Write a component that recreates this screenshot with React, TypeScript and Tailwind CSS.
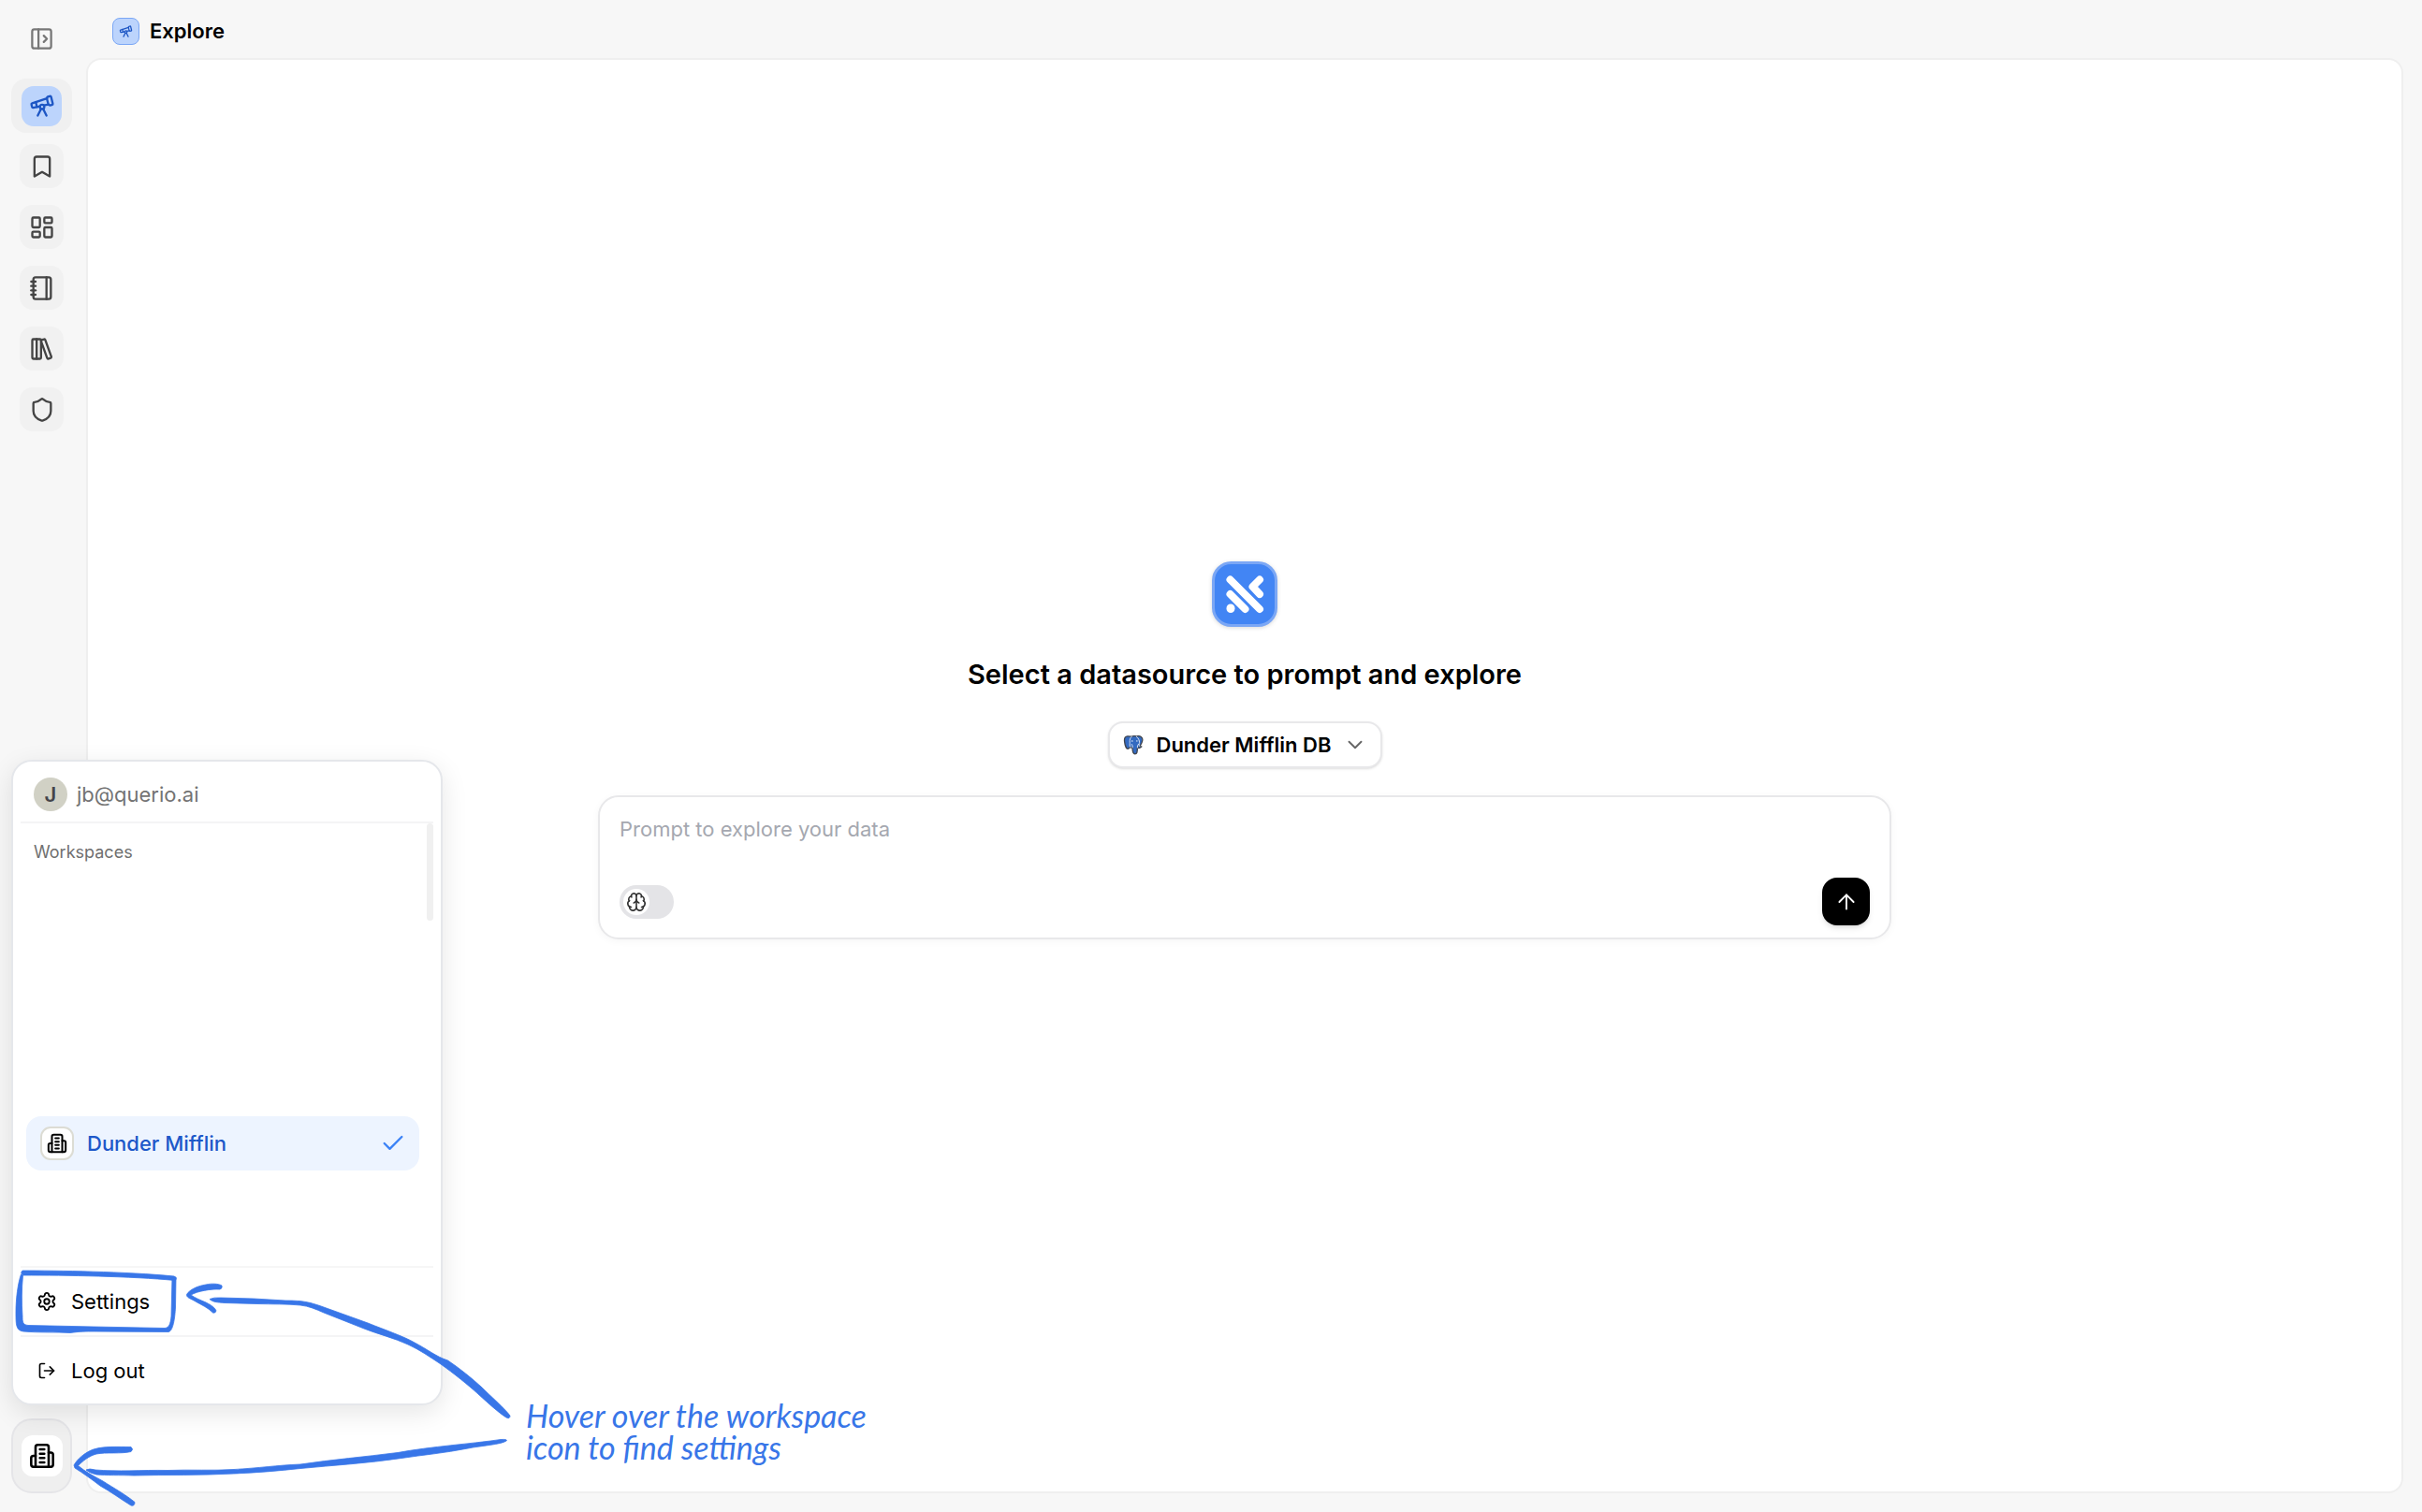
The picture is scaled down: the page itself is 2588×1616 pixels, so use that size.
import {ReactNode, useState} from 'react';
import {
    ArrowUp,
    Bookmark,
    Brain,
    Check,
    ChevronDown,
    LayoutDashboard,
    LibraryBig,
    LogOut,
    Notebook,
    PanelLeftOpen,
    Settings,
    Shield,
    Telescope,
} from 'lucide-react';

const navItems = [
    {label: 'Saved', icon: Bookmark},
    {label: 'Dashboards', icon: LayoutDashboard},
    {label: 'Notebooks', icon: Notebook},
    {label: 'Library', icon: LibraryBig},
    {label: 'Security', icon: Shield},
];

const WorkspaceIcon = ({className}: {className: string}) => (
    <svg viewBox="0 0 24 24" fill="none" stroke="currentColor" strokeWidth="2.2" strokeLinecap="round"
         strokeLinejoin="round" className={className}>
        <path d="M6 22V4a2 2 0 0 1 2-2h8a2 2 0 0 1 2 2v18Z"/>
        <path d="M6 12H4a2 2 0 0 0-2 2v6a2 2 0 0 0 2 2h2"/>
        <path d="M18 9h2a2 2 0 0 1 2 2v9a2 2 0 0 1-2 2h-2"/>
        <path d="M10 6h4M10 10h4M10 14h4M10 18h4"/>
    </svg>
);

const QuerioLogo = () => (
    <svg viewBox="0 0 70 70" fill="none" stroke="white" strokeWidth="8" strokeLinecap="round"
         strokeLinejoin="round" className="size-[70px] drop-shadow-sm">
        <rect x="1.5" y="1.5" width="67" height="67" rx="19" fill="#4285f4" stroke="#7ba7f5" strokeWidth="3"/>
        <path d="M19.5 19.500L51 51"/>
        <path d="M19.5 35L35.500 51"/>
        <path d="M51 19.500L43.500 27L51 35"/>
        <path d="M20 50v.6" strokeWidth="9"/>
    </svg>
);

const PostgresIcon = () => (
    <svg viewBox="0 0 24 24" className="size-[22px]" strokeLinejoin="round" strokeLinecap="round">
        <path
            d="M6.200 2C2.500 1.600 1.300 4.200 1.700 8c.4 3.600 2 8.500 3.900 8.700 1.200.1 1.900-1.100 2.700-2 .6.600 1.500.8 2.600.8.200 2.500-.1 7 2.900 7.200 2.600.1 2.900-2.400 3-7.200 1.200.4 3.700.2 4.900-1.400-.9-.1-1.800 0-2.200-.5C21.600 10.500 24.100 5 21.300 2.900 19.500 1.500 17.300 1.700 15.600 2.100 13 1.500 11.600 1.600 10 2.400 8.800 2 7.500 2 6.200 2Z"
            fill="#336ac0" stroke="#3f434c" strokeWidth="1.4"/>
        <path
            d="M10 2.500C8 4 7.700 6.500 7.900 9c.1 2-.5 3.700.4 5.500M15.600 2.300c2.600 2 3.600 5 3.500 7-.1 1.500-.9 2.500.2 4.300M11 15.200c.3-1.600-.1-2.500-.8-3.700M16.800 15.300c-.3-1.800.4-2.500 1.200-4"
            fill="none" stroke="#e8eef8" strokeWidth="1"/>
        <circle cx="10.700" cy="7.700" r=".8" fill="white"/>
        <circle cx="16.200" cy="7.500" r=".8" fill="white"/>
    </svg>
);

const MenuButton = ({icon, children}: {icon: ReactNode, children: ReactNode}) => (
    <button type="button" className="flex w-full items-center gap-4 px-[18px] py-2">
        {icon}
        {children}
    </button>
);

const Sidebar = () => (
    <aside className="flex w-[92px] shrink-0 flex-col items-center pt-[26px] pr-[15px] pb-5 pl-3">
        <button type="button" aria-label="Open sidebar" className="p-0.5 text-[#777777]">
            <PanelLeftOpen size={27} strokeWidth={2}/>
        </button>

        <nav className="mt-[27px] flex flex-col items-center gap-[18px]">
            <a href="#explore" aria-label="Explore"
               className="flex h-[58px] w-[65px] items-center justify-center rounded-2xl bg-[#f0f0f0]">
                <span className="flex size-[43px] items-center justify-center rounded-[13px] bg-[#bcd4fc] text-[#1d56c4]">
                    <Telescope size={28}/>
                </span>
            </a>
            {navItems.map(({label, icon: Icon}, idx) => (
                <a key={label} href={`#${label.toLowerCase()}`} aria-label={label}
                   className={`flex size-[47px] items-center justify-center rounded-[14px] bg-[#f1f1f1] text-[#444444] ${idx === 0 ? '-mt-1.5' : ''}`}>
                    <Icon size={28}/>
                </a>
            ))}
        </nav>

        <button type="button" aria-label="Workspace"
                className="mt-auto flex h-20 w-[65px] items-center justify-center rounded-[22px] border-2 border-[#e5e5e8] bg-[#efefef]">
            <span className="flex size-11 items-center justify-center rounded-xl bg-white text-black">
                <WorkspaceIcon className="size-7"/>
            </span>
        </button>
    </aside>
);

const WorkspaceMenu = () => (
    <div
        className="absolute bottom-[114px] left-3 flex h-[690px] w-[461px] flex-col rounded-[22px] border-2 border-[#e5e7eb] bg-white px-2 text-[22px] leading-7 shadow-[0_8px_28px_rgba(0,0,0,0.10)]">
        <div className="flex h-[66px] shrink-0 items-center gap-2.5 border-b-2 border-[#f4f4f5] px-3.5 pt-1.5 text-[#737373]">
            <span className="flex size-9 items-center justify-center rounded-full bg-[#d1d1c5] font-semibold text-[#44444a]">J</span>
            jb@querio.ai
        </div>

        <div className="flex min-h-0 flex-1 justify-between border-b-2 border-[#f6f6f6]">
            <div className="flex flex-1 flex-col pl-1.5">
                <h2 className="px-2 pt-[19px] text-[18px] leading-6 text-[#6f6f6f]">Workspaces</h2>
                <button type="button"
                        className="mt-auto mb-[102px] flex h-[58px] items-center gap-3.5 rounded-2xl bg-[#edf4ff] pr-3.5 pl-[15px] font-medium text-[#1d58c9]">
                    <span className="flex size-9 items-center justify-center rounded-[11px] border-2 border-[#dcdcd4] bg-white text-black">
                        <WorkspaceIcon className="size-[22px]"/>
                    </span>
                    Dunder Mifflin
                    <Check size={28} strokeWidth={2} className="ml-auto text-[#3b82f6]"/>
                </button>
            </div>
            <div className="ml-2 h-[104px] w-[7px] rounded-full bg-[#f0f0f0]"/>
        </div>

        <div className="flex h-[74px] shrink-0 items-center border-b-2 border-[#f4f4f5]">
            <MenuButton icon={<Settings size={22} className="-mx-px"/>}>Settings</MenuButton>
        </div>
        <div className="flex h-[71px] shrink-0 items-center">
            <MenuButton icon={<LogOut size={20}/>}>Log out</MenuButton>
        </div>
    </div>
);

// hand drawn strokes that point at the workspace icon and at the settings entry
const Annotation = () => (
    <div className="pointer-events-none absolute bottom-0 left-0 h-[286px] w-[960px] text-[#3876e8]">
        <svg viewBox="0 0 560 286" fill="currentColor" stroke="currentColor" strokeWidth="0.8" strokeLinejoin="round"
             className="h-[286px] w-[560px]">
            {/*box round settings*/}
            <path d="M24 28C60 28 135 29 186 34Q190 36 187 38.500C140 34 70 33 25 33Q21 31 24 28Z"/>
            <path d="M22.500 32C19 42 17 58 17 73C17 86 17 92 25 93C40 94.500 60 93.500 75 94.500C85 93 92 93 100 93L180 93.500C185 93 187 78 187.500 67L188 35H184L183 77C182 85 181 89 176 89.500L100 88L30 86.500C24 86 24 82 24 77C23 62 23 48 24.500 33Z"/>
            {/*arrow to settings*/}
            <path d="M199.500 53.500C202 49 210 44.500 220 43C226 41.500 234 42 237 44Q238 47 235 48C225 47.500 211 50 204 54C208 57 214 59.500 220 62C226 65 230 68 231 71Q230 74 227.500 73C223 68 214 64 209 61C204 58 199 57 199.500 53.500Z"/>
            <path d="M224 58.500Q228 56.500 236 57L271 58L305 60C325 60 331 62 343 66L393 84C413 92 433 99 443 105C455 111 466 120 478.500 124C492 133 504 143 514 152C525 163 538 174 545 183Q545 187 541 185C533 180 522 170 511 160C500 150 485 138 471 128C459 120 449 113 436 107C421 100 404 96 389 90L346 73C337 69 330 66 321 65C307 63.500 290 64 275 63.500L240 62.500C232 62 227 61.500 224 58.500Z"/>
            {/*arrow to the workspace icon*/}
            <path d="M79 236C82 230 91 222 100 219C111 215.500 126 216.500 140 216.500Q143 219 140 221.500C130 224 113 222 103 224C95 226 88 232 83.500 236.500C91 243 101 248 110 253C121 260 135 268 144 275.500Q144 280 140 279C130 273 118 264 107 258C98 251 88 244 80 239Z"/>
            <path d="M92 241Q95 239 102 241C125 243 152 241 179 241.500C203 240.500 228 242 250 240.500C277 239 296 236 321 235C355 230 390 227 425 222.500C460 216 505 213 535 208.500Q543 208 541 210C535 214 515 215 500 218C475 223 452 225 429 228.500C392 234 357 236 321 239.500C298 242 274 244 250 245C214 247 179 246 143 247C128 246.500 114 247 103 246Q95 244 92 241Z"/>
        </svg>
        <p className="absolute top-[166px] left-[562px] font-[Lato,cursive] text-[34px] leading-[34px] italic">
            Hover over the workspace<br/>icon to find settings
        </p>
    </div>
);

const PromptBox = () => {
    const [prompt, setPrompt] = useState('');
    const [thinking, setThinking] = useState(false);

    return (
        <form onSubmit={e => e.preventDefault()}
              className="mt-[29px] w-full max-w-[1382px] rounded-[22px] border-2 border-[#e8e8ea] bg-white px-[21px] pt-5 pb-[13px] shadow-[0_2px_8px_rgba(0,0,0,0.04)]">
            <textarea value={prompt} onChange={e => setPrompt(e.target.value)} rows={2} aria-label="Prompt"
                      placeholder="Prompt to explore your data"
                      className="block h-[66px] w-full resize-none text-[22px] leading-7 outline-none placeholder:text-[#a5a8b0]"/>
            <div className="flex items-center justify-between">
                <label className="relative flex h-9 w-[58px] cursor-pointer items-center rounded-full bg-[#e4e4e7] p-1 has-checked:justify-end">
                    <input type="checkbox" checked={thinking} onChange={e => setThinking(e.target.checked)}
                           aria-label="Deep thinking" className="sr-only"/>
                    <span className="flex size-7 items-center justify-center rounded-full bg-white text-[#333333]">
                        <Brain size={22} strokeWidth={1.75}/>
                    </span>
                </label>
                <button type="submit" aria-label="Send"
                        className="flex size-[51px] items-center justify-center rounded-2xl bg-black text-white shadow-md">
                    <ArrowUp size={26} strokeWidth={1.75}/>
                </button>
            </div>
        </form>
    );
};

export default function App() {
    return (
        <div className="relative flex min-h-screen bg-[#f7f7f7] font-[Inter,sans-serif] text-black">
            <Sidebar/>

            <div className="flex min-w-0 flex-1 flex-col pr-5 pb-5">
                <header className="flex h-[62px] items-center gap-[11px] pt-1 pl-7">
                    <span className="flex size-[29px] items-center justify-center rounded-lg border border-[#7ba7f5] bg-[#bcd4fc] text-[#1d56c4]">
                        <Telescope size={15}/>
                    </span>
                    <h1 className="text-[22px] leading-7 font-semibold">Explore</h1>
                </header>

                <main className="flex flex-1 flex-col items-center justify-center rounded-2xl border-2 border-[#efefef] bg-white px-8 pb-[54px]">
                    <QuerioLogo/>
                    <h2 className="mt-[31px] text-[29px] leading-10 font-semibold">Select a datasource to prompt and explore</h2>
                    <button type="button"
                            className="mt-[30px] flex h-[50px] items-center rounded-2xl border-2 border-[#e8e8ea] bg-white px-3.5 text-[22px] leading-7 font-semibold shadow-sm">
                        <PostgresIcon/>
                        <span className="mr-3 ml-3.5">Dunder Mifflin DB</span>
                        <ChevronDown size={26} strokeWidth={1.75} className="text-[#666666]"/>
                    </button>
                    <PromptBox/>
                </main>
            </div>

            <WorkspaceMenu/>
            <Annotation/>
        </div>
    );
}
